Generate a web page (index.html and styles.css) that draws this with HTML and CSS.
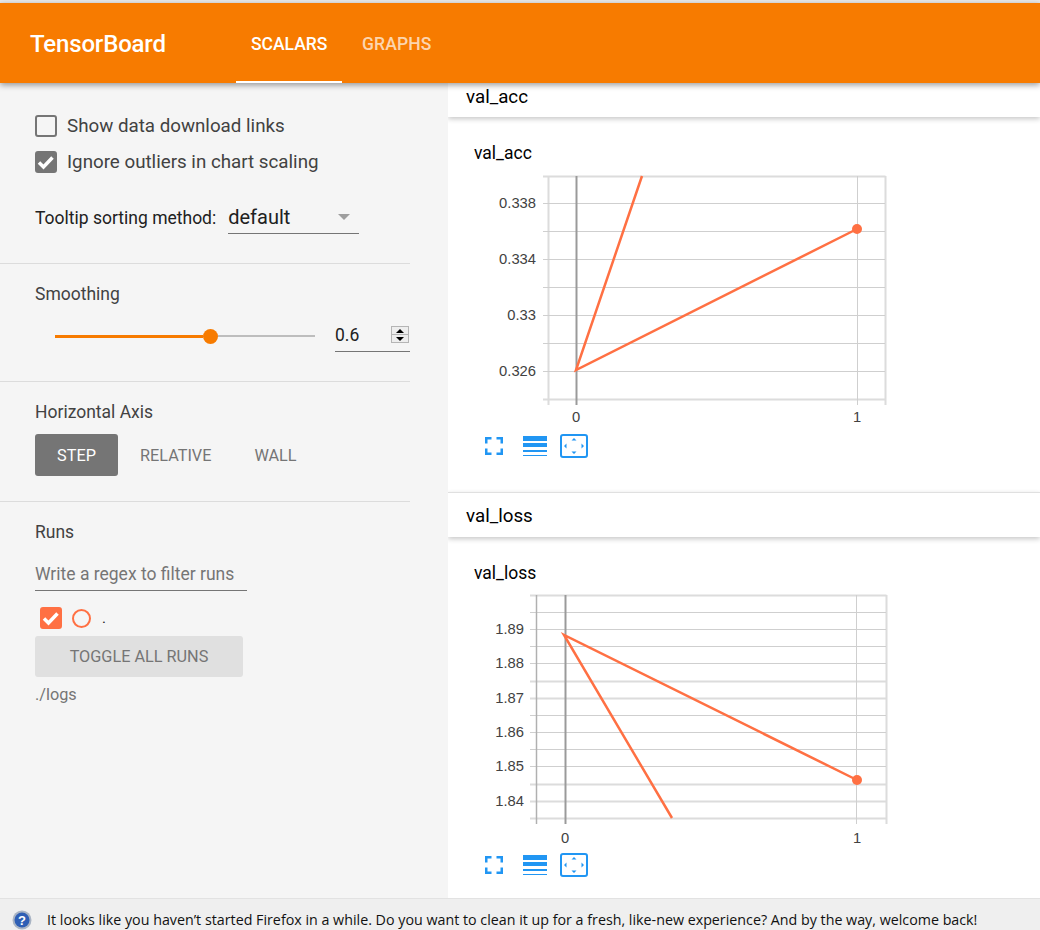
FILE: index.html
```html
<!DOCTYPE html>
<html>
<head>
  <title>TensorBoard</title>
  <link rel="stylesheet" href="styles.css">
</head>
<body>
  <header class="topbar">
    <div class="brand">TensorBoard</div>
    <nav class="tabs">
      <div class="tab tab-active">SCALARS</div>
      <div class="tab">GRAPHS</div>
    </nav>
  </header>

  <div class="content">
    <aside class="sidebar">
      <section class="side-options">
        <label class="check-row">
          <span class="box"></span>
          <span>Show data download links</span>
        </label>
        <label class="check-row">
          <span class="box box-checked">
            <svg viewBox="0 0 22 22" width="22" height="22"><path d="M4 11.500l4.500 4.500 9-9.500" fill="none" stroke="#fff" stroke-width="3.500"/></svg>
          </span>
          <span>Ignore outliers in chart scaling</span>
        </label>
        <div class="sort-row">
          <span>Tooltip sorting method:</span>
          <div class="dropdown">
            <span>default</span>
            <i class="caret"></i>
          </div>
        </div>
      </section>

      <section class="side-smoothing">
        <h3 class="side-title">Smoothing</h3>
        <div class="slider-row">
          <div class="slider">
            <div class="slider-fill"></div>
            <div class="slider-knob"></div>
            <div class="slider-rest"></div>
          </div>
          <div class="number-field">
            <span>0.6</span>
            <div class="spinner">
              <i class="spin-up"></i>
              <i class="spin-down"></i>
            </div>
          </div>
        </div>
      </section>

      <section class="side-axis">
        <h3 class="side-title">Horizontal Axis</h3>
        <div class="axis-buttons">
          <div class="axis-btn axis-btn-on">STEP</div>
          <div class="axis-btn axis-btn-rel">RELATIVE</div>
          <div class="axis-btn axis-btn-wall">WALL</div>
        </div>
      </section>

      <section class="side-runs">
        <h3 class="side-title">Runs</h3>
        <div class="regex-input">Write a regex to filter runs</div>
        <div class="run-row">
          <span class="box box-run">
            <svg viewBox="0 0 22 22" width="22" height="22"><path d="M4 11.500l4.500 4.500 9-9.500" fill="none" stroke="#fff" stroke-width="3.500"/></svg>
          </span>
          <span class="run-dot"></span>
          <span class="run-name">.</span>
        </div>
        <div class="toggle-btn">TOGGLE ALL RUNS</div>
        <div class="logdir">./logs</div>
      </section>
    </aside>

    <main class="main">
      <div class="pane-head pane-head-first">val_acc</div>
      <div class="card card-acc">
        <div class="card-title">val_acc</div>
        <svg class="chart chart-acc" width="560" height="260" viewBox="440 170 560 260">
          <g class="grid">
            <path class="edge" d="M543 176.500H885.500M548.500 176V405M885.500 176V405M543 399.500H885.500"/>
            <path d="M543 203.500H885M543 231.500H885M543 259.500H885M543 287.500H885M543 315.500H885M543 343.500H885M543 371.500H885"/>
            <path d="M857.500 176V405"/>
            <path class="zero" d="M576.500 176V405"/>
          </g>
          <path class="series" d="M642 176L576 370L857 229"/>
          <circle class="series-dot" cx="857" cy="229" r="5"/>
          <g class="ylabels">
            <text x="536" y="208">0.338</text>
            <text x="536" y="264">0.334</text>
            <text x="536" y="320">0.33</text>
            <text x="536" y="376">0.326</text>
          </g>
          <g class="xlabels">
            <text x="576" y="422">0</text>
            <text x="857" y="422">1</text>
          </g>
        </svg>
        <div class="chart-tools tools-acc">
          <svg width="18" height="18" viewBox="0 0 18 18"><path class="tool-corner" d="M1.250 6.500V1.250H6.500M11.500 1.250H16.750V6.500M16.750 11.500V16.750H11.500M6.500 16.750H1.250V11.500"/></svg>
          <svg width="24" height="20" viewBox="0 0 24 20"><path class="tool-fill" d="M0 0h24v5H0zM0 7h24v4H0zM0 14h24v2H0zM0 19h24v1H0z"/></svg>
          <svg width="28" height="24" viewBox="0 0 28 24"><rect class="tool-stroke" x="1" y="1" width="26" height="22" rx="2"/><path class="tool-fill" d="M14 4l2.500 2.500h-5zM14 20l2.500-2.500h-5zM4 12l2.500-2.500v5zM24 12l-2.500-2.500v5z"/></svg>
        </div>
      </div>

      <div class="pane-head">val_loss</div>
      <div class="card card-loss">
        <div class="card-title">val_loss</div>
        <svg class="chart chart-loss" width="560" height="255" viewBox="440 590 560 255">
          <g class="grid">
            <path class="edge" d="M530 595.500H886.500M886.500 595V824M530 818.500H886.500M530 681.500H886M530 698.500H886M530 784.500H886M530 801.500H886"/>
            <path d="M530 612.500H886M530 629.500H886M530 646.500H886M530 663.500H886M530 715.500H886M530 732.500H886M530 749.500H886M530 766.500H886"/>
            <path d="M856.500 595V824"/>
            <path class="left-axis" d="M536.500 595V824"/>
            <path class="zero" d="M565.500 595V824"/>
          </g>
          <path class="series" d="M672 818L564 635L857 780"/>
          <circle class="series-dot" cx="857" cy="780" r="5"/>
          <g class="ylabels">
            <text x="524" y="634">1.89</text>
            <text x="524" y="668">1.88</text>
            <text x="524" y="703">1.87</text>
            <text x="524" y="737">1.86</text>
            <text x="524" y="771">1.85</text>
            <text x="524" y="806">1.84</text>
          </g>
          <g class="xlabels">
            <text x="565" y="843">0</text>
            <text x="857" y="843">1</text>
          </g>
        </svg>
        <div class="chart-tools tools-loss">
          <svg width="18" height="18" viewBox="0 0 18 18"><path class="tool-corner" d="M1.250 6.500V1.250H6.500M11.500 1.250H16.750V6.500M16.750 11.500V16.750H11.500M6.500 16.750H1.250V11.500"/></svg>
          <svg width="24" height="20" viewBox="0 0 24 20"><path class="tool-fill" d="M0 0h24v5H0zM0 7h24v4H0zM0 14h24v2H0zM0 19h24v1H0z"/></svg>
          <svg width="28" height="24" viewBox="0 0 28 24"><rect class="tool-stroke" x="1" y="1" width="26" height="22" rx="2"/><path class="tool-fill" d="M14 4l2.500 2.500h-5zM14 20l2.500-2.500h-5zM4 12l2.500-2.500v5zM24 12l-2.500-2.500v5z"/></svg>
        </div>
      </div>
    </main>
  </div>

  <footer class="notice">
    <svg class="notice-icon" width="20" height="20" viewBox="0 0 20 20">
      <circle cx="10" cy="10" r="9.500" fill="#a9b4c4"/>
      <circle cx="10" cy="10" r="7.500" fill="#2f5fb5"/>
      <text x="10" y="15" text-anchor="middle" class="notice-q">?</text>
    </svg>
    <span>It looks like you haven’t started Firefox in a while. Do you want to clean it up for a fresh, like-new experience? And by the way, welcome back!</span>
  </footer>
</body>
</html>
```

FILE: styles.css
```css
* {
  box-sizing: border-box;
}

html, body {
  height: 100%;
}

body {
  margin: 0;
  padding-top: 3px;
  display: flex;
  flex-direction: column;
  overflow: hidden;
  font-family: Roboto, sans-serif;
  background-color: #e9e9e9;
  color: #212121;
}

/* top bar */
.topbar {
  height: 80px;
  flex: none;
  display: flex;
  background-color: #f77b00;
  color: #fff;
  position: relative;
  z-index: 3;
  box-shadow: 0 2px 6px rgba(0, 0, 0, 0.4);
}

.brand {
  width: 236px;
  padding: 27px 0 0 30px;
  font-size: 24px;
  font-weight: 500;
  letter-spacing: -0.17px;
}

.tabs {
  display: flex;
}

.tab {
  padding: 31px 15px 0;
  width: 106px;
  text-align: center;
  font-size: 17.500px;
  font-weight: 500;
  color: rgba(255, 255, 255, 0.7);
}

.tab + .tab {
  padding-left: 20px;
  padding-right: 0;
  letter-spacing: 0.15px;
  text-align: left;
}

.tab-active {
  color: #fff;
  border-bottom: 2px solid #fff;
}

/* main area */
.content {
  flex: 1;
  display: flex;
  min-height: 0;
}

.sidebar {
  width: 449px;
  flex: none;
  background-color: #f5f5f5;
  border-right: 1px solid #e6e6e6;
  padding-right: 38px;
}

.sidebar section {
  border-bottom: 1px solid #dcdcdc;
  padding-left: 35px;
}

.side-options {
  height: 181px;
  padding-top: 31px;
  font-size: 18.750px;
}

.side-smoothing {
  height: 118px;
  padding-top: 19px;
}

.side-axis {
  height: 120px;
  padding-top: 19px;
}

.sidebar .side-runs {
  border-bottom: none;
  padding-top: 19px;
}

.side-title {
  margin: 0;
  font-size: 17.500px;
  line-height: 22px;
  font-weight: 400;
  color: #424242;
}

.check-row {
  display: flex;
  align-items: center;
  gap: 10px;
  height: 23px;
  margin-bottom: 13px;
  color: #424242;
}

.box {
  display: block;
  width: 22px;
  height: 22px;
  flex: none;
  border: 2px solid #757575;
  border-radius: 3px;
}

.box svg {
  display: block;
  margin: -2px;
}

.box-checked {
  background-color: #757575;
}

.box-run {
  background-color: #ff7043;
  border-color: #ff7043;
}

.sort-row {
  display: flex;
  align-items: flex-end;
  margin-top: 28px;
  font-size: 17.500px;
  color: #212121;
}

.sort-row > span {
  padding-bottom: 6px;
}

.dropdown {
  width: 131px;
  height: 33px;
  margin-left: 12px;
  display: flex;
  align-items: center;
  justify-content: space-between;
  padding-right: 9px;
  border-bottom: 1px solid #757575;
  font-size: 20px;
}

.caret {
  width: 0;
  height: 0;
  border-left: 6px solid transparent;
  border-right: 6px solid transparent;
  border-top: 6px solid #9e9e9e;
}

.slider-row {
  display: flex;
  align-items: center;
  margin-top: 17px;
  padding-left: 20px;
}

.slider {
  width: 260px;
  height: 16px;
  margin-top: -2px;
  display: flex;
  align-items: center;
}

.slider-fill {
  width: 148px;
  height: 3px;
  background-color: #f77b00;
}

.slider-knob {
  width: 15px;
  height: 15px;
  flex: none;
  border-radius: 50%;
  background-color: #f77b00;
}

.slider-rest {
  flex: 1;
  height: 2px;
  background-color: #bdbdbd;
}

.number-field {
  width: 75px;
  height: 30px;
  margin-left: 20px;
  position: relative;
  border-bottom: 1px solid #757575;
  font-size: 17.500px;
  line-height: 26px;
}

.spinner {
  position: absolute;
  right: 1px;
  top: 4px;
  width: 18px;
  height: 17px;
  border: 1px solid #b5b5b5;
  background-color: #eee;
  display: flex;
  flex-direction: column;
}

.spinner i {
  flex: 1;
  display: flex;
  align-items: center;
  justify-content: center;
}

.spin-up {
  border-bottom: 1px solid #b5b5b5;
}

.spin-up::before,
.spin-down::before {
  content: "";
  border-left: 4px solid transparent;
  border-right: 4px solid transparent;
}

.spin-up::before {
  border-bottom: 4px solid #000;
}

.spin-down::before {
  border-top: 4px solid #000;
}

.axis-buttons {
  display: flex;
  margin-top: 11px;
  font-size: 16.250px;
  font-weight: 400;
}

.axis-btn {
  height: 42px;
  line-height: 44px;
  color: #757575;
}

.axis-btn-on {
  width: 83px;
  text-align: center;
  border-radius: 3px;
  background-color: #757575;
  color: #fff;
}

.axis-btn-rel {
  margin-left: 22px;
}

.axis-btn-wall {
  margin-left: 43px;
}

.regex-input {
  width: 212px;
  height: 37px;
  margin-top: 11px;
  padding-top: 10px;
  border-bottom: 1px solid #757575;
  font-size: 17.500px;
  color: #757575;
}

.run-row {
  display: flex;
  align-items: center;
  height: 22px;
  margin-top: 16px;
  padding-left: 5px;
}

.run-dot {
  width: 19px;
  height: 19px;
  margin-left: 10px;
  border: 2px solid #ff7043;
  border-radius: 50%;
}

.run-name {
  margin-left: 11px;
  font-size: 15px;
  color: #212121;
}

.toggle-btn {
  width: 208px;
  height: 41px;
  margin-top: 7px;
  line-height: 42px;
  text-align: center;
  border-radius: 3px;
  background-color: #e0e0e0;
  color: #757575;
  font-size: 16.250px;
}

.logdir {
  margin-top: 8px;
  font-size: 16.250px;
  color: #757575;
}

.main {
  flex: 1;
  min-width: 0;
  overflow: hidden;
  background-color: #fff;
  margin-left: -1px;
}

.pane-head {
  height: 45px;
  padding-left: 18px;
  line-height: 46px;
  font-size: 18.750px;
  color: #000;
  background-color: #fff;
  border-top: 1px solid #e0e0e0;
  box-shadow: 0 2px 5px rgba(0, 0, 0, 0.22);
  position: relative;
}

.pane-head-first {
  height: 34px;
  line-height: 28px;
  border-top: none;
}

.card {
  padding-left: 26px;
}

.card-acc {
  height: 375px;
  padding-top: 26px;
}

.card-loss {
  height: 361px;
  padding-top: 26px;
}

.card-title {
  font-size: 17.500px;
  line-height: 20px;
  color: #000;
}

.chart {
  display: block;
  margin-left: -34px;
}

.chart-acc {
  margin-top: 7px;
}

.chart-loss {
  margin-top: 7px;
}

.grid path {
  fill: none;
  stroke: #cfcfcf;
  stroke-width: 1;
}

.grid .edge {
  stroke: #dcdcdc;
  stroke-width: 2;
}

.grid .left-axis {
  stroke: #b0b0b0;
  stroke-width: 1.500;
}

.grid .zero {
  stroke: #9a9a9a;
  stroke-width: 2;
}

.series {
  fill: none;
  stroke: #ff7043;
  stroke-width: 2.500;
}

.series-dot {
  fill: #ff7043;
}

.ylabels text,
.xlabels text {
  font-family: "Liberation Sans", Arial, sans-serif;
  font-size: 14.750px;
  fill: #424242;
}

.ylabels text {
  text-anchor: end;
}

.xlabels text {
  text-anchor: middle;
}

.chart-tools {
  display: flex;
  align-items: center;
  gap: 20px;
  margin-left: 11px;
}

.tools-acc {
  margin-top: 4px;
}

.tools-loss {
  margin-top: 8px;
}

.chart-tools svg:last-child {
  margin-left: -7px;
}

.tool-stroke {
  fill: none;
  stroke: #2196f3;
  stroke-width: 2;
}

.tool-corner {
  fill: none;
  stroke: #2196f3;
  stroke-width: 2.500;
}

.tool-fill {
  fill: #2196f3;
}

/* firefox notice */
.notice {
  height: 32px;
  flex: none;
  display: flex;
  align-items: center;
  gap: 15px;
  padding: 10px 0 0 12px;
  background-color: #efefef;
  border-top: 1px solid #e2e2e2;
  font-family: "Open Sans", sans-serif;
  font-size: 14.270px;
  color: #111;
  position: relative;
  z-index: 2;
}

.notice-q {
  font-family: "Liberation Sans", sans-serif;
  font-size: 13px;
  font-weight: 700;
  fill: #fff;
}
```
